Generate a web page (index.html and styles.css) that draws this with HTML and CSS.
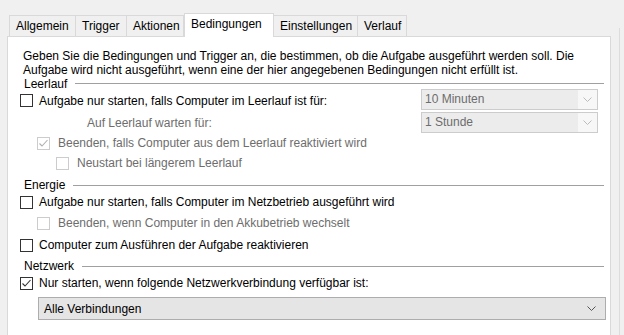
FILE: index.html
```html
<!DOCTYPE html>
<html lang="de">
<head>
  <meta charset="UTF-8">
  <title>Bedingungen</title>
  <link rel="stylesheet" href="styles.css">
</head>
<body>
  <div class="window">
    <div class="main">
      <div class="tabs">
        <div class="tab">Allgemein</div>
        <div class="tab">Trigger</div>
        <div class="tab">Aktionen</div>
        <div class="tab active">Bedingungen</div>
        <div class="tab">Einstellungen</div>
        <div class="tab">Verlauf</div>
      </div>

      <div class="panel">
        <p class="intro">Geben Sie die Bedingungen und Trigger an, die bestimmen, ob die Aufgabe ausgeführt werden soll. Die Aufgabe wird nicht ausgeführt, wenn eine der hier angegebenen Bedingungen nicht erfüllt ist.</p>

        <!-- Leerlauf -->
        <div class="group-head"><span>Leerlauf</span><i></i></div>
        <div class="row r1">
          <span class="check"></span>
          <span class="label">Aufgabe nur starten, falls Computer im Leerlauf ist für:</span>
          <div class="combo disabled"><span>10 Minuten</span><b><svg width="9" height="5" viewBox="0 0 9 5"><polyline points="0.5,0.5 4.5,4.5 8.5,0.5" fill="none" stroke="#bcbcbc"/></svg></b></div>
        </div>
        <div class="row r2">
          <span class="label dim indent-wait">Auf Leerlauf warten für:</span>
          <div class="combo disabled small"><span>1 Stunde</span><b><svg width="9" height="5" viewBox="0 0 9 5"><polyline points="0.5,0.5 4.5,4.5 8.5,0.5" fill="none" stroke="#bcbcbc"/></svg></b></div>
        </div>
        <div class="row r3 lvl1">
          <span class="check off on"><svg width="11" height="11" viewBox="0 0 11 11"><polyline points="1.5,5.5 4,8 9.5,2" fill="none" stroke="#b0b0b0" stroke-width="1.1"/></svg></span>
          <span class="label dim">Beenden, falls Computer aus dem Leerlauf reaktiviert wird</span>
        </div>
        <div class="row r4 lvl2">
          <span class="check off"></span>
          <span class="label dim">Neustart bei längerem Leerlauf</span>
        </div>

        <!-- Energie -->
        <div class="group-head g2"><span>Energie</span><i></i></div>
        <div class="row r5">
          <span class="check"></span>
          <span class="label">Aufgabe nur starten, falls Computer im Netzbetrieb ausgeführt wird</span>
        </div>
        <div class="row r6 lvl1">
          <span class="check off"></span>
          <span class="label dim">Beenden, wenn Computer in den Akkubetrieb wechselt</span>
        </div>
        <div class="row r7">
          <span class="check"></span>
          <span class="label">Computer zum Ausführen der Aufgabe reaktivieren</span>
        </div>

        <!-- Netzwerk -->
        <div class="group-head g3"><span>Netzwerk</span><i></i></div>
        <div class="row r8">
          <span class="check"><svg width="11" height="11" viewBox="0 0 11 11"><polyline points="1.5,5.5 4,8 9.5,2" fill="none" stroke="#333" stroke-width="1.1"/></svg></span>
          <span class="label">Nur starten, wenn folgende Netzwerkverbindung verfügbar ist:</span>
        </div>
        <div class="combo net"><span>Alle Verbindungen</span><b><svg width="9" height="5" viewBox="0 0 9 5"><polyline points="0.5,0.5 4.5,4.5 8.5,0.5" fill="none" stroke="#555"/></svg></b></div>
      </div>
    </div>
    <div class="edge"></div>
  </div>
</body>
</html>
```

FILE: styles.css
```css
body {
  margin: 0;
  background: #f0f0f0;
  font-family: "Liberation Sans", Arial, sans-serif;
  font-size: 12px;
  color: #000;
}

.window {
  display: flex;
  height: 335px;
  overflow: hidden;
}

.main {
  width: 611px;
  padding-left: 7px;
  box-sizing: border-box;
}

/* tab strip */
.tabs {
  display: flex;
  padding: 15px 0 0 2px;
  height: 21px;
  align-items: flex-end;
}
.tab {
  height: 21px;
  line-height: 21px;
  padding: 0 6px;
  border: 1px solid #d9d9d9;
  border-bottom: none;
  border-left: none;
  box-sizing: border-box;
  background: #f0f0f0;
}
.tab:first-child {
  border-left: 1px solid #d9d9d9;
}
.tab:nth-child(1) { width: 67px; }
.tab:nth-child(2) { width: 51px; }
.tab:nth-child(3) { width: 57px; }
.tab:nth-child(5) { width: 84px; }
.tab:nth-child(6) { width: 49px; }
.tab.active {
  width: 90px;
  height: 24px;
  line-height: 21px;
  background: #fff;
  border-left: 1px solid #d9d9d9;
  margin-bottom: -1px;
  position: relative;
  z-index: 1;
}
.tab.active + .tab { border-left: none; }

/* white page */
.panel {
  background: #fff;
  border: 1px solid #d9d9d9;
  height: 320px;
  box-sizing: border-box;
  padding: 12px 0 0 12px;
}

.intro {
  margin: 0 0 0 3px;
  line-height: 14px;
  width: 575px;
}

.group-head {
  display: flex;
  align-items: center;
  height: 13px;
  margin: 0 0 0 4px;
  width: 580px;
}
.group-head i {
  flex: 1;
  height: 1px;
  background: #a0a0a0;
  margin-left: 8px;
}
.group-head.g2 { margin-top: 4px; height: 14px; }
.group-head.g3 { margin-top: 3px; height: 14px; }

.row {
  display: flex;
  align-items: center;
  position: relative;
}
.r1 { height: 21px; }
.r2 { height: 23px; }
.r3 { height: 18px; }
.r4 { height: 22px; }
.r5 { height: 20px; }
.r6 { height: 22px; }
.r7 { height: 22px; }
.r8 { height: 20px; }

.lvl1 { padding-left: 17px; }
.lvl2 { padding-left: 36px; }

.check {
  width: 13px;
  height: 13px;
  border: 1px solid #333;
  box-sizing: border-box;
  background: #fff;
  margin-right: 6px;
  display: flex;
  align-items: center;
  justify-content: center;
  flex: none;
}
.check.off { border-color: #cccccc; }
.lvl1 .check, .lvl2 .check { margin-right: 8px; }

.label.dim { color: #6d6d6d; }
.indent-wait { margin-left: 67px; }

.combo {
  display: flex;
  align-items: center;
  box-sizing: border-box;
  border: 1px solid #cccccc;
  background: #f7f7f7;
}
.combo span {
  flex: 1;
  padding-left: 3px;
}
.combo b {
  width: 19px;
  display: flex;
  justify-content: center;
}
.combo.disabled {
  position: absolute;
  left: 401px;
  width: 177px;
  height: 21px;
  color: #6d6d6d;
}
.combo.disabled span {
  background: #ececec;
  height: 19px;
  line-height: 19px;
}
.r1 .combo { top: -1px; }
.r2 .combo { top: 1px; }

.combo.net {
  margin: 4px 0 0 18px;
  width: 568px;
  height: 23px;
  background: #e5e5e5;
  border-color: #adadad;
}
.combo.net span { padding-left: 5px; }
.combo.net b { width: 28px; }

.edge {
  width: 8px;
  margin-top: 28px;
  border-right: 1px solid #dcdcdc;
}
```
